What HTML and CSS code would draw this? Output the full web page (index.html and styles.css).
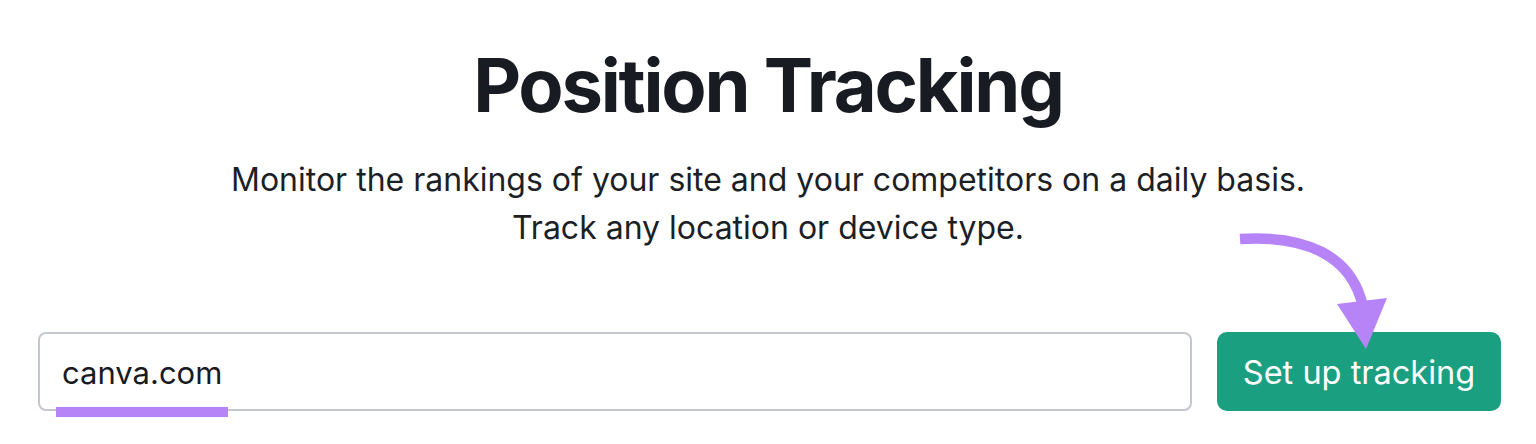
FILE: index.html
```html
<!DOCTYPE html>
<html lang="en">
<head>
    <meta charset="UTF-8">
    <meta name="viewport" content="width=device-width, initial-scale=1.0">
    <title>Position Tracking</title>
    <link rel="stylesheet" href="styles.css">
</head>
<body>
    <div class="page">
        <h1>Position Tracking</h1>
        <p class="lead">Monitor the rankings of your site and your competitors on a daily basis.<br>Track any location or device type.</p>

        <form class="tracker">
            <div class="field">
                <span class="field-value">canva.com</span>
                <!-- highlight under the domain -->
                <span class="field-mark"></span>
            </div>
            <button type="button" class="btn-start">Set up tracking</button>
        </form>

        <!-- callout arrow pointing at the button -->
        <svg class="arrow" width="170" height="130" viewBox="0 0 170 130">
            <path d="M10,14 C75,10 122,30 133,82" fill="none" stroke="#b784f8" stroke-width="10.5"/>
            <polygon points="107,79 157,73 136,124" fill="#b784f8"/>
        </svg>
    </div>
</body>
</html>
```

FILE: styles.css
```css
body {
    margin: 0;
    padding: 0;
    background-color: #fff;
    color: #191b23;
    font-family: Inter, "Noto Sans", sans-serif;
}
.page {
    position: relative;
    width: 1536px;
    height: 444px;
    padding-top: 40px;
    box-sizing: border-box;
}
h1 {
    margin: 0;
    text-align: center;
    font-size: 74px;
    font-weight: 700;
    letter-spacing: -2.2px;
    line-height: 90px;
}
.lead {
    margin: 26px 0 0;
    text-align: center;
    font-size: 32px;
    line-height: 48px;
    color: #1d1f26;
}
.tracker {
    display: flex;
    gap: 25px;
    margin: 80px 35px 0 38px;
}
.field {
    position: relative;
    flex: 1;
    height: 79px;
    box-sizing: border-box;
    border: 2px solid #c4c7cf;
    border-radius: 8px;
    padding: 0 22px;
    display: flex;
    align-items: center;
}
.field-value {
    font-size: 31px;
    color: #191b23;
    padding-top: 2px;
}
.field-mark {
    position: absolute;
    left: 16px;
    top: 73px;
    width: 172px;
    height: 10px;
    background-color: #b784f8;
}
.btn-start {
    width: 284px;
    height: 79px;
    border: 0;
    border-radius: 10px;
    background-color: #1a9f80;
    color: #fff;
    font-family: Inter, "Noto Sans", sans-serif;
    font-size: 32.5px;
    padding: 2px 0 0;
}
.arrow {
    position: absolute;
    left: 1230px;
    top: 225px;
}
```
